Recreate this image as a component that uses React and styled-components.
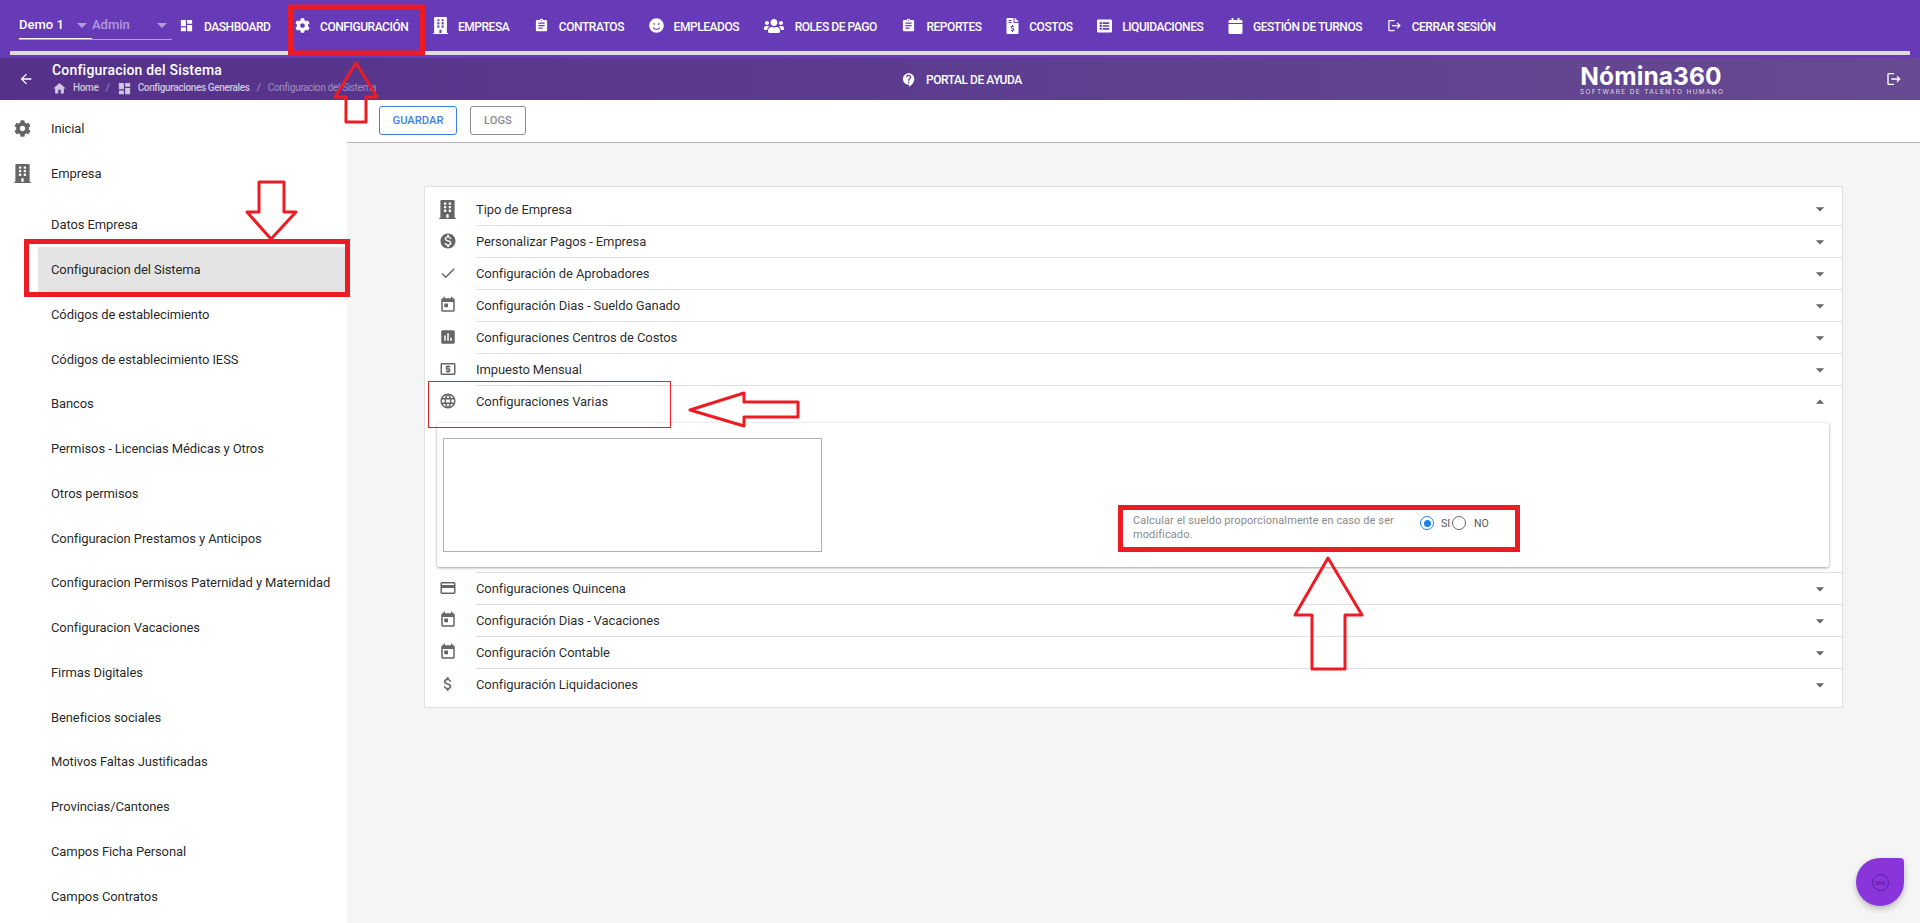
import React from "react";
import styled, { createGlobalStyle } from "styled-components";
import { FaBuilding, FaCalendar, FaCog, FaFileInvoiceDollar, FaListAlt, FaSmile, FaUsers } from "react-icons/fa";
import {
  MdArrowBack,
  MdArrowDropDown,
  MdArrowDropUp,
  MdAssessment,
  MdAssignment,
  MdAttachMoney,
  MdCheck,
  MdContactSupport,
  MdCreditCard,
  MdDashboard,
  MdHome,
  MdLanguage,
  MdLocalAtm,
  MdLogout,
  MdMonetizationOn,
  MdToday,
} from "react-icons/md";

const GlobalStyle = createGlobalStyle`
  html, body {
    margin: 0;
    padding: 0;
    height: 100%;
    overflow: hidden;
    font-family: Roboto, "Liberation Sans", sans-serif;
    background: #f5f5f5;
  }
`;

const Shell = styled.div`
  position: relative;
  width: 1920px;
  height: 923px;
  overflow: hidden;
  display: flex;
  flex-direction: column;
`;

const TopBar = styled.header`
  background: #673ab7;
  height: 58px;
  flex: none;
`;

const TopRow = styled.div`
  height: 51px;
  display: flex;
  align-items: center;
`;

const Strip = styled.div`
  height: 4px;
  margin: 0 10px;
  background: #dddbe0;
`;

const Selects = styled.div`
  display: flex;
  width: 153px;
  margin-left: 19px;
  margin-right: 7px;
  height: 39px;
  align-self: flex-start;
  border-bottom: 1px solid rgba(255, 255, 255, 0.5);
  box-sizing: content-box;
`;

const SelectBox = styled.div`
  width: ${(p) => p.$width}px;
  height: 39px;
  margin-bottom: -1px;
  box-sizing: border-box;
  padding: 17px 5px 0 0;
  display: flex;
  justify-content: space-between;
  font-size: 13px;
  line-height: 16px;
  font-weight: 500;
  color: ${(p) => (p.$dim ? "rgba(255,255,255,0.5)" : "#fff")};
  border-bottom: 1px solid ${(p) => (p.$dim ? "transparent" : "#fff")};
`;

const Caret = styled.span`
  width: 0;
  height: 0;
  margin-top: 6px;
  border-left: 5px solid transparent;
  border-right: 5px solid transparent;
  border-top: 5px solid rgba(255, 255, 255, 0.5);
`;

const Nav = styled.nav`
  display: flex;
  align-items: center;
  gap: 24.6px;
  padding-top: 2px;
`;

const NavItem = styled.a`
  display: flex;
  align-items: center;
  gap: 10px;
  color: #fff;
  font-size: 12px;
  font-weight: 500;
  white-space: nowrap;
  letter-spacing: -0.45px;
`;

const NavIcon = styled.span`
  display: flex;
  justify-content: center;
  width: ${(p) => p.$width || 15}px;
  font-size: ${(p) => p.$size || 15}px;
  margin-top: -2px;
`;

const CrumbBar = styled.div`
  height: 42px;
  flex: none;
  display: flex;
  align-items: center;
  color: #fff;
  background: linear-gradient(90deg, #55318a 0%, #5d3d90 50%, #674a91 100%);
`;

const BackLink = styled.span`
  width: 52px;
  flex: none;
  display: flex;
  justify-content: center;
  padding-right: 1px;
  box-sizing: border-box;
  font-size: 16px;
`;

const Titles = styled.div`
  width: 849px;
  flex: none;
`;

const PageTitle = styled.div`
  font-size: 14px;
  line-height: 18px;
  font-weight: 500;
  letter-spacing: 0.2px;
  margin: -2px 0 2px;
`;

const Crumbs = styled.div`
  display: flex;
  align-items: center;
  font-size: 10px;
  line-height: 14px;
  font-weight: 500;
  color: rgba(255, 255, 255, 0.72);
  letter-spacing: -0.35px;
`;

const CrumbIcon = styled.span`
  display: flex;
  font-size: 15px;
  margin-right: 6px;
`;

const CrumbSep = styled.span`
  margin: 0 7px;
  font-size: 11px;
  font-weight: 400;
  color: rgba(255, 255, 255, 0.45);
`;

const CrumbLast = styled.span`
  font-weight: 400;
  color: rgba(255, 255, 255, 0.45);
`;

const HelpLink = styled.a`
  width: 679px;
  flex: none;
  display: flex;
  align-items: center;
  gap: 9px;
  padding-top: 2px;
  box-sizing: border-box;
  font-size: 12px;
  font-weight: 500;
  letter-spacing: -0.45px;
`;

const Logo = styled.div`
  width: 142px;
  flex: none;
  text-align: center;
`;

const LogoName = styled.div`
  font-family: Inter, "Open Sans", sans-serif;
  font-size: 24.5px;
  line-height: 26px;
  font-weight: 700;
  letter-spacing: 0.1px;
  white-space: nowrap;
`;

const LogoTag = styled.div`
  font-family: Inter, "Open Sans", sans-serif;
  font-size: 6.5px;
  line-height: 6px;
  letter-spacing: 1.35px;
  white-space: nowrap;
  color: rgba(255, 255, 255, 0.8);
`;

const LogoutLink = styled.span`
  margin-left: auto;
  margin-right: 18px;
  display: flex;
  font-size: 16px;
`;

const Body = styled.div`
  flex: 1;
  min-height: 0;
  display: flex;
`;

const Sidebar = styled.aside`
  width: 347px;
  flex: none;
  background: #fff;
  padding-top: 6.6px;
  box-sizing: border-box;
  overflow: hidden;
`;

const SideRow = styled.div`
  height: 44.75px;
  display: flex;
  align-items: center;
  font-size: 13px;
  letter-spacing: -0.1px;
  color: rgba(0, 0, 0, 0.87);
  padding-left: 51px;
  box-sizing: border-box;
  margin-top: ${(p) => (p.$first ? "6.4px" : "0")};
  white-space: nowrap;
  ${(p) => p.$active && "background: #e4e4e4; margin-left: 38px; padding-left: 13px;"}
`;

const SideIcon = styled.span`
  display: flex;
  justify-content: center;
  width: 22px;
  margin-left: -40px;
  margin-right: 18px;
  font-size: ${(p) => p.$size || 17}px;
  color: #666;
`;

const Main = styled.main`
  flex: 1;
  min-width: 0;
  background: #f5f5f5;
`;

const Toolbar = styled.div`
  height: 43px;
  background: #fff;
  border-bottom: 1px solid #b5b5b5;
  display: flex;
  align-items: flex-start;
  gap: 13px;
  padding: 6px 0 0 32px;
  box-sizing: border-box;
`;

const ToolButton = styled.button`
  height: 29px;
  width: ${(p) => p.$width}px;
  padding: 0;
  background: #fff;
  border: 1px solid ${(p) => (p.$primary ? "#3f7fe6" : "#8c8c8c")};
  border-radius: 3px;
  color: ${(p) => (p.$primary ? "#3f7fe6" : "#8c8c8c")};
  font-family: Roboto, sans-serif;
  font-size: 11.2px;
  font-weight: 500;
`;

const Card = styled.section`
  margin: 43px 77px 0;
  background: #fff;
  border: 1px solid #e0e0e0;
  padding: 6px 0 7px;
`;

const Row = styled.div`
  height: 32px;
  display: flex;
  align-items: center;
  box-sizing: border-box;
  font-size: 13px;
  letter-spacing: -0.1px;
  color: rgba(0, 0, 0, 0.85);
`;

const RowIcon = styled.span`
  width: 51px;
  flex: none;
  display: flex;
  justify-content: center;
  padding-right: 6px;
  box-sizing: border-box;
  font-size: ${(p) => p.$size || 18}px;
  color: #666;
`;

const RowBody = styled.div`
  flex: 1;
  height: 100%;
  display: flex;
  align-items: center;
  justify-content: space-between;
  box-sizing: border-box;
  border-top: ${(p) => (p.$line ? "1px solid #e0e0e0" : "0")};
`;

const RowCaret = styled.span`
  display: flex;
  margin-right: 12px;
  font-size: 20px;
  color: #666;
`;

const Panel = styled.div`
  margin: 6px 13px 5px 12px;
  height: 144px;
  background: #fff;
  box-sizing: border-box;
  padding: 15px 6px;
  display: flex;
  border-radius: 2px;
  box-shadow: 0 1px 3px rgba(0, 0, 0, 0.35), 0 0 2px rgba(0, 0, 0, 0.08);
`;

const Blank = styled.div`
  width: 379px;
  height: 114px;
  box-sizing: border-box;
  border: 1px solid #b0b0b0;
`;

const Field = styled.div`
  margin-left: 311px;
  align-self: flex-end;
  display: flex;
  margin-bottom: 10px;
`;

const FieldText = styled.div`
  width: 287px;
  font-size: 11px;
  line-height: 14px;
  letter-spacing: 0.1px;
  color: #8a8a8a;
`;

const RadioCircle = styled.span`
  width: 14px;
  height: 14px;
  flex: none;
  box-sizing: border-box;
  border-radius: 50%;
  border: ${(p) => (p.$on ? "1.5px solid #1e80e8" : "1.5px solid #666")};
  display: flex;
  align-items: center;
  justify-content: center;
  &::after {
    content: "";
    display: ${(p) => (p.$on ? "block" : "none")};
    width: 7px;
    height: 7px;
    border-radius: 50%;
    background: #1e80e8;
  }
`;

const RadioLabel = styled.span`
  font-size: 10.5px;
  line-height: 14px;
  margin: 1px ${(p) => p.$after}px 0 ${(p) => p.$before}px;
  color: #555;
`;

const Radios = styled.div`
  display: flex;
  align-items: flex-start;
  margin-top: 2px;
`;

const ChatBubble = styled.div`
  position: absolute;
  left: 1856px;
  top: 858px;
  width: 48px;
  height: 48px;
  background: #8a35dc;
  border-radius: 50% 4px 50% 50%;
  box-shadow: 0 3px 6px rgba(0, 0, 0, 0.25);
  display: flex;
  align-items: center;
  justify-content: center;
`;

const ChatBadge = styled.span`
  width: 17px;
  height: 17px;
  box-sizing: border-box;
  border: 1px solid #5a1f9e;
  border-radius: 50%;
  color: #5a1f9e;
  font-size: 6px;
  font-weight: 700;
  display: flex;
  align-items: center;
  justify-content: center;
`;

const Marks = styled.svg`
  position: absolute;
  left: 0;
  top: 0;
  pointer-events: none;
`;

const navItems = [
  { label: "Dashboard", icon: <MdDashboard />, size: 17 },
  { label: "Configuración", icon: <FaCog /> },
  { label: "Empresa", icon: <FaBuilding />, size: 17 },
  { label: "Contratos", icon: <MdAssignment />, size: 17 },
  { label: "Empleados", icon: <FaSmile /> },
  { label: "Roles de Pago", icon: <FaUsers />, size: 20, width: 21 },
  { label: "Reportes", icon: <MdAssignment />, size: 17 },
  { label: "Costos", icon: <FaFileInvoiceDollar />, size: 16, width: 13 },
  { label: "Liquidaciones", icon: <FaListAlt />, size: 16 },
  { label: "Gestión de Turnos", icon: <FaCalendar />, size: 16, width: 15 },
  { label: "Cerrar Sesión", icon: <MdLogout />, size: 17 },
];

const subItems = [
  "Datos Empresa",
  "Configuracion del Sistema",
  "Códigos de establecimiento",
  "Códigos de establecimiento IESS",
  "Bancos",
  "Permisos - Licencias Médicas y Otros",
  "Otros permisos",
  "Configuracion Prestamos y Anticipos",
  "Configuracion Permisos Paternidad y Maternidad",
  "Configuracion Vacaciones",
  "Firmas Digitales",
  "Beneficios sociales",
  "Motivos Faltas Justificadas",
  "Provincias/Cantones",
  "Campos Ficha Personal",
  "Campos Contratos",
];

const topRows = [
  { label: "Tipo de Empresa", icon: <FaBuilding />, size: 19 },
  { label: "Personalizar Pagos - Empresa", icon: <MdMonetizationOn /> },
  { label: "Configuración de Aprobadores", icon: <MdCheck /> },
  { label: "Configuración Dias - Sueldo Ganado", icon: <MdToday /> },
  { label: "Configuraciones Centros de Costos", icon: <MdAssessment /> },
  { label: "Impuesto Mensual", icon: <MdLocalAtm /> },
];

const bottomRows = [
  { label: "Configuraciones Quincena", icon: <MdCreditCard /> },
  { label: "Configuración Dias - Vacaciones", icon: <MdToday /> },
  { label: "Configuración Contable", icon: <MdToday /> },
  { label: "Configuración Liquidaciones", icon: <MdAttachMoney /> },
];

const arrows = [
  "356,63 335,97 346,97 346,122 366,122 366,97 377,97",
  "259,182 284,182 284,212 296,212 271,239 247,212 259,212",
  "690,410 744,393 744,402 798,402 798,417 744,417 744,426",
  "1328,558 1362,615 1345,615 1345,669 1312,669 1312,615 1295,615",
];

function AccordionRow({ item, line, open }) {
  return (
    <Row>
      <RowIcon $size={item.size}>{item.icon}</RowIcon>
      <RowBody $line={line}>
        {item.label}
        <RowCaret>{open ? <MdArrowDropUp /> : <MdArrowDropDown />}</RowCaret>
      </RowBody>
    </Row>
  );
}

export default function App() {
  return (
    <Shell>
      <GlobalStyle />
      <TopBar>
        <TopRow>
          <Selects>
            <SelectBox $width={73}>
              Demo 1<Caret />
            </SelectBox>
            <SelectBox $width={80} $dim>
              Admin<Caret />
            </SelectBox>
          </Selects>
          <Nav>
            {navItems.map((item) => (
              <NavItem key={item.label}>
                <NavIcon $size={item.size} $width={item.width}>
                  {item.icon}
                </NavIcon>
                {item.label.toUpperCase()}
              </NavItem>
            ))}
          </Nav>
        </TopRow>
        <Strip />
      </TopBar>

      <CrumbBar>
        <BackLink>
          <MdArrowBack />
        </BackLink>
        <Titles>
          <PageTitle>Configuracion del Sistema</PageTitle>
          <Crumbs>
            <CrumbIcon>
              <MdHome />
            </CrumbIcon>
            Home
            <CrumbSep>/</CrumbSep>
            <CrumbIcon>
              <MdDashboard />
            </CrumbIcon>
            Configuraciones Generales
            <CrumbSep>/</CrumbSep>
            <CrumbLast>Configuracion del Sistema</CrumbLast>
          </Crumbs>
        </Titles>
        <HelpLink>
          <MdContactSupport size={16} />
          PORTAL DE AYUDA
        </HelpLink>
        <Logo>
          <LogoName>Nómina360</LogoName>
          <LogoTag>SOFTWARE DE TALENTO HUMANO</LogoTag>
        </Logo>
        <LogoutLink>
          <MdLogout />
        </LogoutLink>
      </CrumbBar>

      <Body>
        <Sidebar>
          <SideRow>
            <SideIcon>
              <FaCog />
            </SideIcon>
            Inicial
          </SideRow>
          <SideRow>
            <SideIcon $size={19}>
              <FaBuilding />
            </SideIcon>
            Empresa
          </SideRow>
          {subItems.map((label, i) => (
            <SideRow key={label} $first={i === 0} $active={i === 1}>
              {label}
            </SideRow>
          ))}
        </Sidebar>

        <Main>
          <Toolbar>
            <ToolButton $primary $width={78}>
              GUARDAR
            </ToolButton>
            <ToolButton $width={56}>LOGS</ToolButton>
          </Toolbar>
          <Card>
            {topRows.map((item, i) => (
              <AccordionRow key={item.label} item={item} line={i > 0} />
            ))}
            <AccordionRow item={{ label: "Configuraciones Varias", icon: <MdLanguage /> }} line open />
            <Panel>
              <Blank />
              <Field>
                <FieldText>Calcular el sueldo proporcionalmente en caso de ser modificado.</FieldText>
                <Radios>
                  <RadioCircle $on />
                  <RadioLabel $before={7} $after={2}>
                    SI
                  </RadioLabel>
                  <RadioCircle />
                  <RadioLabel $before={8} $after={0}>
                    NO
                  </RadioLabel>
                </Radios>
              </Field>
            </Panel>
            {bottomRows.map((item) => (
              <AccordionRow key={item.label} item={item} line />
            ))}
          </Card>
        </Main>
      </Body>

      <ChatBubble>
        <ChatBadge>360</ChatBadge>
      </ChatBubble>

      <Marks width="1920" height="923" viewBox="0 0 1920 923" fill="none" stroke="#ed1c24">
        <rect x="290.5" y="7" width="132" height="46" strokeWidth="5" />
        <rect x="26.5" y="241.5" width="321" height="53" strokeWidth="5" />
        <rect x="428.5" y="381.5" width="242" height="46" strokeWidth="1" />
        <rect x="1120.5" y="507.5" width="397" height="42" strokeWidth="5" />
        {arrows.map((points) => (
          <polygon key={points} points={points} strokeWidth="3" strokeLinejoin="round" />
        ))}
      </Marks>
    </Shell>
  );
}
